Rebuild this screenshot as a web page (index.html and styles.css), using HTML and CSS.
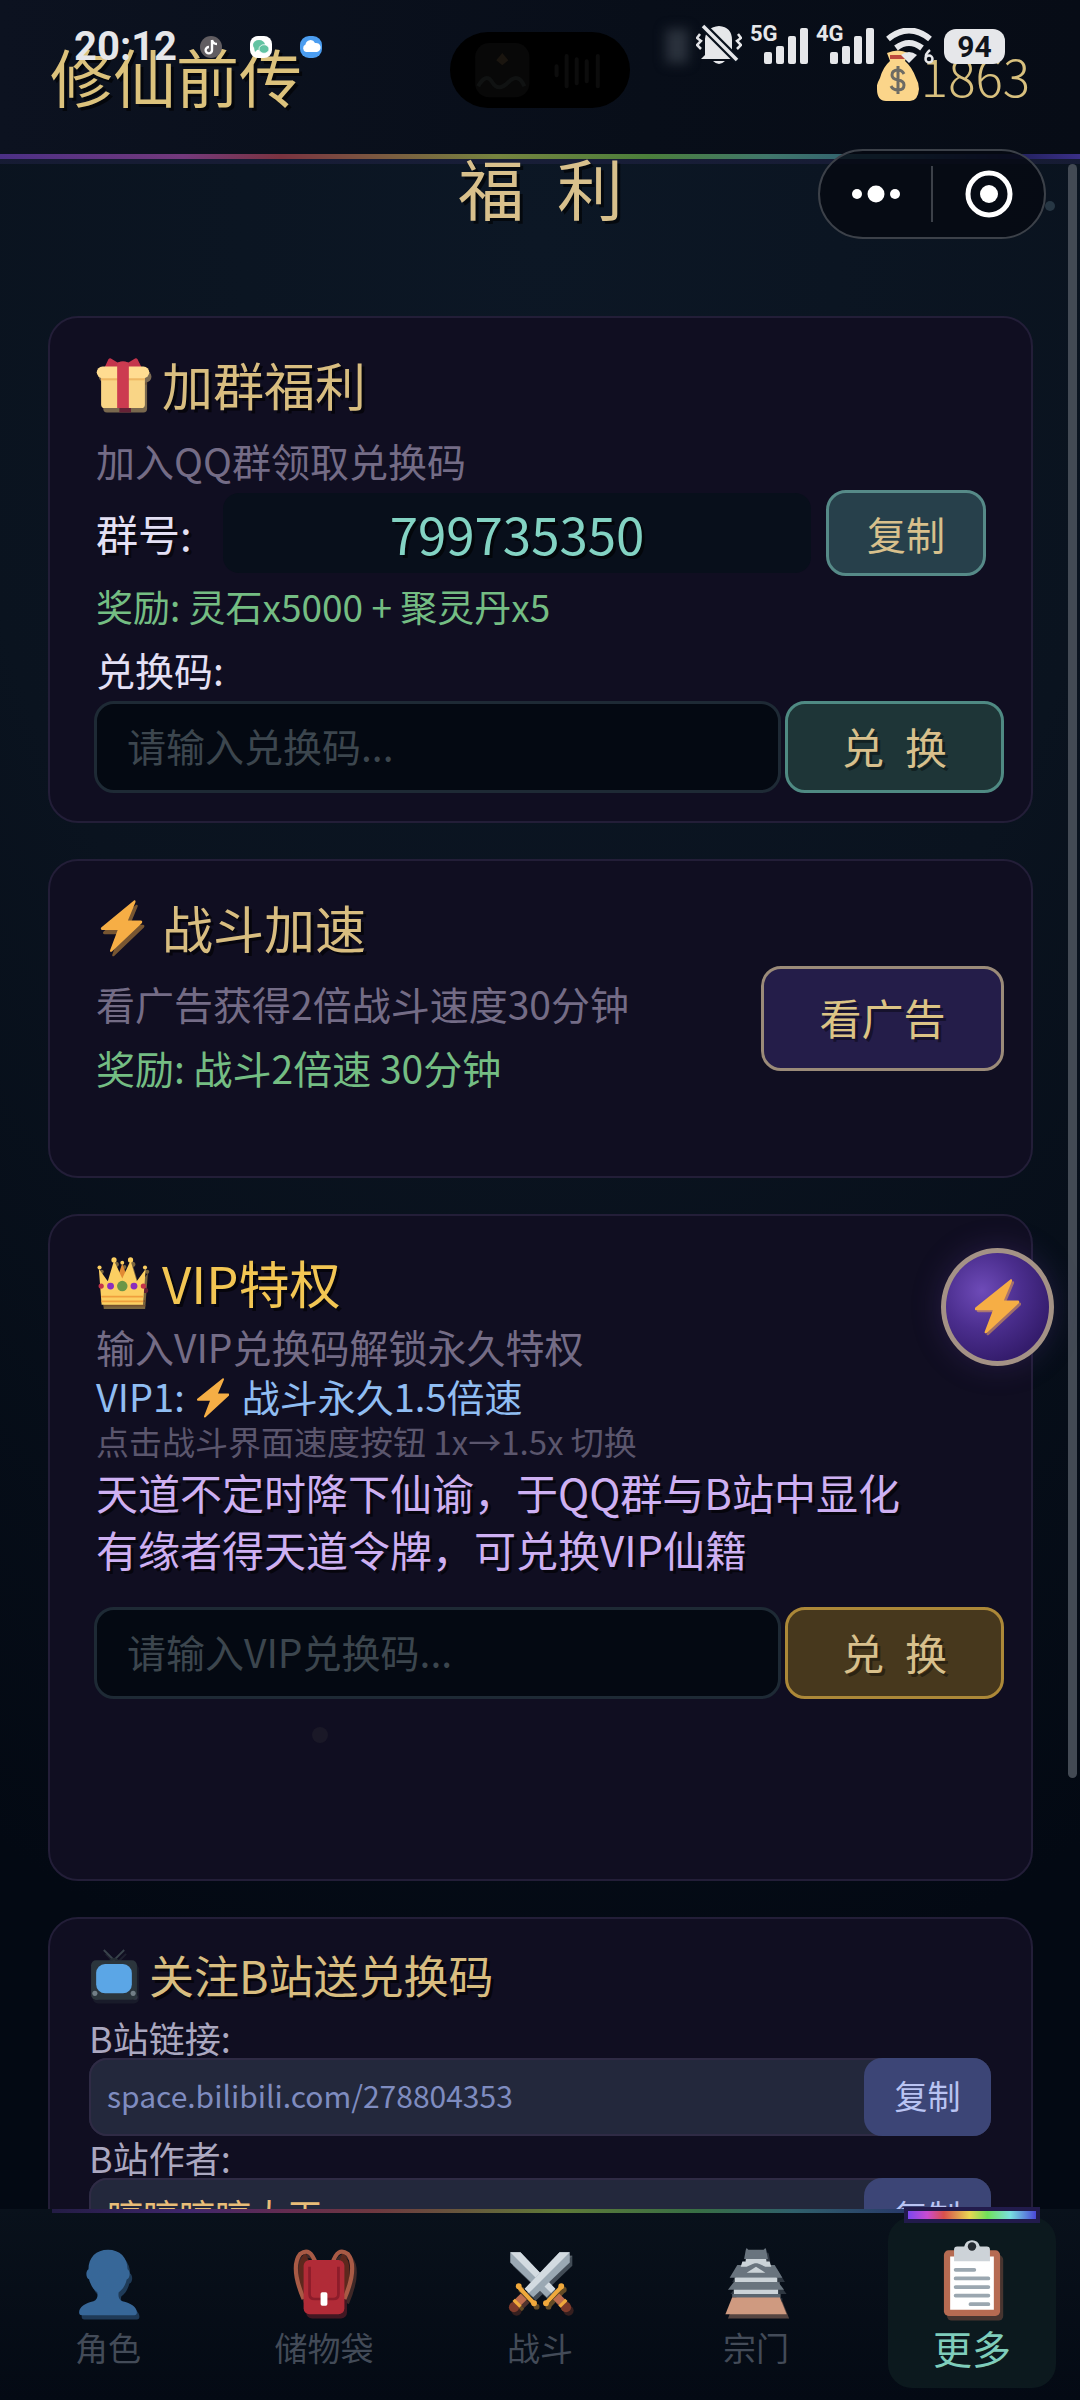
FILE: index.html
```
<!DOCTYPE html>
<html lang="zh-CN">
<head>
    <meta charset="UTF-8">
    <meta name="viewport" content="width=device-width, initial-scale=1.0">
    <title>修仙前传 - 福利</title>
    <link rel="stylesheet" href="styles.css">
</head>

<body>
    <!-- shared icons -->
    <svg class="sprite" aria-hidden="true">
        <symbol id="bolt" viewBox="2 0 32 36" preserveAspectRatio="none" overflow="visible">
            <path fill="#f6ae45" d="M27.500 .5c.9-.7 1.800 0 1.400 1L23 14h10c1.300 0 1.600 1.100.8 1.900L10.500 35.300c-1 .7-1.900 0-1.400-1L15 20.500H3c-1.300 0-1.600-1.200-.7-1.900z"/>
        </symbol>
        <symbol id="gift" viewBox="0 0 36 36" overflow="visible">
            <path fill="#c4344c" d="M5 8 8 1.500q1-1.300 2.300-.2L14.500 4q3.500-2 7 0l4.200-2.700q1.300-1.100 2.300.2L31 8z"/>
            <rect x="3" y="12" width="30" height="23" rx="2.500" fill="#f9d586"/>
            <rect x="3" y="13" width="30" height="3" fill="#eeb763"/>
            <rect x="0" y="6.500" width="36" height="8" rx="4" fill="#ffdc91"/>
            <path fill="#cc3b50" d="M14 4q4-2 8 0v31h-8z"/>
        </symbol>
        <symbol id="crown" viewBox="0 0 36 36" overflow="visible">
            <path fill="#e28a34" d="M9 18 12 6l3 8 3-9 3 9 3-8 3 12z"/>
            <path fill="#fccf62" d="M3 35 1 9l6.500 9L12 3 18 16 24 3 28.500 18 35 9l-2 26z"/>
            <g fill="#fccf62"><circle cx="1.500" cy="8" r="1.500"/><circle cx="12" cy="2.500" r="1.900"/><circle cx="24" cy="2.500" r="1.900"/><circle cx="34.500" cy="8" r="1.500"/><circle cx="18" cy="4.500" r="1.400"/></g>
            <path fill="#ef9f3d" d="M2.800 28.500h30.400v1.300H2.800zM2.900 32h30.200v1.200H2.900z"/>
            <circle cx="18" cy="21.500" r="3.800" fill="#6b9647"/>
            <circle cx="9.500" cy="21.500" r="2.500" fill="#8b2dbd"/><circle cx="26.500" cy="21.500" r="2.500" fill="#8b2dbd"/>
            <circle cx="2.700" cy="21.500" r="1.900" fill="#c4344c"/><circle cx="33.300" cy="21.500" r="1.900" fill="#c4344c"/>
        </symbol>
        <symbol id="tv" viewBox="0 0 36 40" overflow="visible">
            <path d="M10 0 18 8 26 0" fill="none" stroke="#39434b" stroke-width="1.500"/>
            <path fill="#252e35" d="M14 8q4-4 8 0z"/>
            <rect y="8" width="36" height="31" rx="4" fill="#2b353c"/>
            <rect x="4" y="11" width="28" height="23" rx="7" fill="#5ba6e6"/>
            <circle cx="3" cy="34" r="2" fill="#727f87"/><circle cx="33" cy="34" r="2" fill="#727f87"/>
        </symbol>
        <symbol id="bag" viewBox="0 0 36 40" overflow="visible">
            <path fill="#5d281d" d="M7 3Q-1 10 7 32l3-22zM29 3q8 7 0 29l-3-22z"/>
            <path d="M6 30Q-2 11 4 3.500 10-1 13 9M30 30q8-19 2-26.500Q26-1 23 9" fill="none" stroke="#a85a45" stroke-width="2.500"/>
            <rect x="6" y="7" width="24" height="32" rx="3.500" fill="#b12b37"/>
            <path d="M9.500 11v16q0 3 3 3h11q3 0 3-3V11" fill="none" stroke="#8c1c2a" stroke-width="1.600"/>
            <rect x="16" y="26" width="4" height="8" rx="1" fill="#fff"/>
        </symbol>
        <symbol id="user" viewBox="0 0 36 40" overflow="visible">
            <path fill="#376798" d="M18 1c7 0 11.500 4.500 11.500 11.500 1.800 1 1.600 5.500-.5 6-.8 3.500-2.500 6-4.700 7.500-.5 2.500.2 4.500 2.200 5.300 5 1.200 8.500 3.200 8.500 6.700 0 1-.5 1.500-1.500 1.500H2.500C1.500 39.500 1 39 1 38c0-3.500 3.500-5.500 8.500-6.700 2-.8 2.700-2.800 2.200-5.300C9.500 24.500 7.800 22 7 18.500c-2.100-.5-2.300-5-.5-6C6.500 5.500 11 1 18 1z"/>
        </symbol>
        <symbol id="sword" viewBox="0 0 36 36" overflow="visible">
            <path fill="#9aa8b3" d="M35.500.5v6L14 27l-5-5L29.500.5z"/>
            <path fill="#d3dbe1" d="M35.500.5 11.500 24.500 9 22 29.500.5z"/>
            <path d="M8.500 26.500 4 31" stroke="#bd6c4e" stroke-width="5"/>
            <circle cx="2.700" cy="32.800" r="3" fill="#7d3a2b"/>
            <path d="M5.500 21 14 30" stroke="#f0a93c" stroke-width="2.400"/>
            <circle cx="5.500" cy="20.500" r="1.700" fill="#f0a93c"/><circle cx="14.500" cy="30.500" r="1.700" fill="#f0a93c"/>
            <path d="m2.500 28.500 4 4" stroke="#f0a93c" stroke-width="2"/>
        </symbol>
        <symbol id="swords" viewBox="0 0 36 36" overflow="visible">
            <g transform="translate(36 0) scale(-1 1)"><use href="#sword" width="36" height="36"/></g>
            <use href="#sword" width="36" height="36"/>
        </symbol>
        <symbol id="castle" viewBox="0 0 36 40" overflow="visible">
            <path fill="#cf9a80" d="M4 29h28l4 10H0z"/>
            <path fill="#5b6670" d="M4 27h28v2H4z"/>
            <path fill="#cbd3d8" d="M5 23h26v4H5zM6 16h24v4H6zM12 6h12v6H12z"/>
            <path fill="#69747e" d="M5 20h26l3.500 4.500h-33zM7 10h2l3 .5 1-1.500h10l1 1.500 3-.5h2l4.500 7.500H2.500zM12 1l.5-1 1 1h9l1-1 .5 1 1 5.500H11z"/>
            <path fill="#cbd3d8" d="M5.500 17.500h25V20h-25zM10 8h2v-1h12v1h2l1 3h-3.500L18 8.500 12.500 11H9zM18 11l5.500 3.500h-11z"/>
        </symbol>
        <symbol id="clipboard" viewBox="0 0 36 50" overflow="visible">
            <rect y="6" width="36" height="42" rx="3" fill="#b66b52"/>
            <path fill="#fff" d="M4 10h28v34H4z"/>
            <path fill="#cdd3d8" d="M6.500 5.500q0-2 2-2H13q1-4 5-4t5 4h4.500q2 0 2 2V13h-23z"/>
            <circle cx="18" cy="3.500" r="2.700" fill="#252b31"/>
            <path d="M7.500 18.500h12M7.500 24h21M7.500 29.500h21M7.500 35h21M17 40.500h11.500" stroke="#9ba7b0" stroke-width="2.400" stroke-linecap="round"/>
        </symbol>
    </svg>

    <header class="top-bar">
        <h1 class="game-name">修仙前传</h1>
        <div class="coins">
            <svg class="coin-bag" viewBox="0 0 42 52">
                <path fill="#fbd58a" d="M13 12 10 4Q21-1 31 4l-3 8q7 6 11 17 3 5 3 11-1 12-9 12H9Q0 52 0 40q-1-4 3-11Q6 18 13 12z"/>
                <path fill="#bd4a3e" d="M13 6h15v4H13z"/>
                <path d="M27 25q-2-4-6-4-6 0-6 5 0 4 6 5t6 5q0 5-6 5-5 0-7-4M21 17v28" fill="none" stroke="#6d6b64" stroke-width="3"/>
            </svg>
            <span>1863</span>
        </div>
    </header>

    <!-- phone status bar -->
    <div class="status-bar">
        <div class="status-left">
            <span class="clock">20:12</span>
            <svg class="app-dot" viewBox="0 0 22 22"><circle cx="11" cy="11" r="11" fill="#615d61"/><path d="M12 4v10a3.200 3.200 0 1 1-3-3M12 4q1 4 5 4" fill="none" stroke="#fff" stroke-width="2.400"/></svg>
            <svg class="app-dot" viewBox="0 0 22 22"><rect width="22" height="22" rx="8" fill="#fff"/><ellipse cx="9" cy="9" rx="6" ry="5" fill="#62c3a2"/><path fill="#62c3a2" d="m4 12 1 4 3-3z"/><ellipse cx="14" cy="13" rx="5" ry="4.300" fill="#62c3a2" stroke="#fff" stroke-width=".8"/></svg>
            <svg class="app-dot" viewBox="0 0 22 22"><rect width="22" height="22" rx="9" fill="#4b9df0"/><path fill="#fff" d="M6 16a4 4 0 0 1-.5-7.500 5 5 0 0 1 9.500-1.500 4.600 4.600 0 0 1 2 9z"/></svg>
        </div>
        <div class="island">
            <svg viewBox="0 0 179 76"><rect x="25" y="11" width="54" height="54" rx="14" fill="#080808"/><path d="m52 21 6 7-6 5-6-5z" fill="#1a150f"/><path d="M28 54q8-14 14-4t16 0 16 4" fill="none" stroke="#101212" stroke-width="4"/><path d="M106 34v9M116 24v30M126 27v24M136 29v20M147 24v30" stroke="#0c0c0c" stroke-width="4" stroke-linecap="round"/></svg>
        </div>
        <div class="status-right">
            <i class="smudge"></i>
            <svg class="bell" viewBox="0 0 46 42"><g fill="#e6e7ea"><path d="M9 31V15Q10 3 23 2q13 1 13 14v15l4 4H5z"/><path d="M17 37h12q-6 6-12 0z"/></g><path d="M6 1 42 37" stroke="#09111d" stroke-width="8"/><path d="M7 2 41 36" stroke="#e6e7ea" stroke-width="3.500"/><path d="m4 10-3 4 4 3-4 4 4 4M42 10l3 4-4 3 4 4-4 4" fill="none" stroke="#e6e7ea" stroke-width="2.500"/></svg>
            <div class="signal"><b>5G</b><svg viewBox="0 0 44 36"><g fill="#e6e7ea"><rect y="24" width="8" height="12" rx="2"/><rect x="12" y="18" width="8" height="18" rx="2"/><rect x="24" y="8" width="8" height="28" rx="2"/><rect x="36" width="8" height="36" rx="2"/></g></svg></div>
            <div class="signal"><b>4G</b><svg viewBox="0 0 44 36"><g fill="#e6e7ea"><rect y="24" width="8" height="12" rx="2"/><rect x="12" y="18" width="8" height="18" rx="2"/><rect x="24" y="8" width="8" height="28" rx="2"/><rect x="36" width="8" height="36" rx="2"/></g></svg></div>
            <svg class="wifi" viewBox="0 0 50 36"><path d="M2 11q21-17 42 0M10 20q13-10 26 0" fill="none" stroke="#e6e7ea" stroke-width="6"/><path fill="#e6e7ea" d="M15 27q8-6 16 0l-8 8z"/><path d="M44 22q-5 4-4 8" fill="none" stroke="#e6e7ea" stroke-width="2.500"/><circle cx="43" cy="31" r="3.500" fill="none" stroke="#e6e7ea" stroke-width="2.500"/></svg>
            <b class="battery">94</b>
        </div>
    </div>

    <!-- mini program capsule -->
    <div class="capsule">
        <button class="capsule-btn" aria-label="更多操作"><svg viewBox="0 0 48 48"><g fill="#fff"><circle cx="5" cy="24" r="5"/><circle cx="24" cy="24" r="8.500"/><circle cx="43" cy="24" r="5"/></g></svg></button>
        <i class="capsule-line"></i>
        <button class="capsule-btn" aria-label="关闭"><svg viewBox="0 0 48 48"><circle cx="24" cy="24" r="21" fill="none" stroke="#fff" stroke-width="5"/><circle cx="24" cy="24" r="9" fill="#fff"/></svg></button>
    </div>

    <main class="page">
        <h2 class="page-title">福&ensp;利</h2>

        <section class="card">
            <h3 class="card-title"><svg class="emoji" viewBox="0 0 36 37"><use href="#gift" x="1.500" y="3" width="36" height="36" opacity=".45"/><use href="#gift" width="36" height="36"/></svg>加群福利</h3>
            <p class="desc">加入QQ群领取兑换码</p>
            <div class="group-row">
                <label for="groupNo">群号:</label>
                <input id="groupNo" class="group-no" type="text" value="799735350" readonly>
                <button class="copy-btn" onclick="copyText('groupNo')">复制</button>
            </div>
            <p class="reward small">奖励: 灵石x5000 + 聚灵丹x5</p>
            <label class="code-label" for="code">兑换码:</label>
            <div class="code-row">
                <input id="code" class="code-input" type="text" placeholder="请输入兑换码...">
                <button class="btn">兑&ensp;换</button>
            </div>
        </section>

        <section class="card ad-card">
            <div class="ad-text">
                <h3 class="card-title"><svg class="emoji" viewBox="0 0 36 37"><use href="#bolt" x="4.500" y="3" width="28" height="36" opacity=".45"/><use href="#bolt" x="3" width="28" height="36"/></svg>战斗加速</h3>
                <p class="desc">看广告获得2倍战斗速度30分钟</p>
                <p class="reward">奖励: 战斗2倍速 30分钟</p>
            </div>
            <button class="btn btn-ad">看广告</button>
        </section>

        <section class="card vip-card">
            <h3 class="card-title vip-title"><svg class="emoji" viewBox="0 0 36 37"><use href="#crown" x="2" y="4" width="34" height="34" opacity=".45"/><use href="#crown" x=".5" y="1" width="34" height="34"/></svg>VIP特权</h3>
            <p class="desc">输入VIP兑换码解锁永久特权</p>
            <p class="vip-line">VIP1: <svg class="emoji-inline"><use href="#bolt"/></svg> 战斗永久1.5倍速</p>
            <p class="hint">点击战斗界面速度按钮 1x→1.5x 切换</p>
            <p class="oracle">天道不定时降下仙谕，于QQ群与B站中显化<br>有缘者得天道令牌，可兑换VIP仙籍</p>
            <div class="code-row">
                <input class="code-input" type="text" placeholder="请输入VIP兑换码..." aria-label="VIP兑换码">
                <button class="btn btn-vip">兑&ensp;换</button>
            </div>
        </section>

        <section class="card bili-card">
            <h3 class="card-title"><svg class="emoji" viewBox="0 0 36 40"><use href="#tv" x="1.500" y="3" width="36" height="40" opacity=".35"/><use href="#tv" width="36" height="40"/></svg>关注B站送兑换码</h3>
            <label class="bili-label" for="biliLink">B站链接:</label>
            <div class="bili-row">
                <input id="biliLink" type="text" value="space.bilibili.com/278804353" readonly>
                <button onclick="copyText('biliLink')">复制</button>
            </div>
            <label class="bili-label" for="biliName">B站作者:</label>
            <div class="bili-row">
                <input id="biliName" class="bili-name" type="text" value="哼哼哼哼大王" readonly>
                <button onclick="copyText('biliName')">复制</button>
            </div>
        </section>
    </main>

    <i class="scroll-thumb"></i>
    <i class="spark spark-top"></i>
    <i class="spark spark-vip"></i>

    <button class="float-btn" aria-label="加速">
        <svg viewBox="0 0 46 57"><use href="#bolt" x="2" y="2" width="44" height="55" opacity=".5"/><use href="#bolt" width="44" height="55"/></svg>
    </button>

    <nav class="tab-bar">
        <a class="tab" href="#"><svg viewBox="0 0 36 40"><use href="#user" x="1.500" y="2.500" width="36" height="40" opacity=".5"/><use href="#user" width="36" height="40"/></svg>角色</a>
        <a class="tab" href="#"><svg viewBox="0 0 36 40"><use href="#bag" x="1.500" y="2.500" width="36" height="40" opacity=".35"/><use href="#bag" width="36" height="40"/></svg>储物袋</a>
        <a class="tab" href="#"><svg viewBox="0 -2 36 40"><use href="#swords" x="1.500" y="2" width="36" height="36" opacity=".4"/><use href="#swords" width="36" height="36"/></svg>战斗</a>
        <a class="tab" href="#"><svg viewBox="0 0 36 40"><use href="#castle" x="1.500" y="2.500" width="36" height="40" opacity=".4"/><use href="#castle" width="36" height="40"/></svg>宗门</a>
        <a class="tab active" href="#"><svg viewBox="0 0 36 50"><use href="#clipboard" x="2" y="3" width="36" height="50" opacity=".35"/><use href="#clipboard" width="36" height="50"/></svg>更多</a>
    </nav>

    <script>
        function copyText(id) {
            const input = document.getElementById(id);
            input.select();
            document.execCommand("copy");
        }
    </script>
</body>
</html>
```
FILE: styles.css
```
* {
    box-sizing: border-box;
}
body {
    margin: 0;
    height: 100vh;
    display: flex;
    flex-direction: column;
    position: relative;
    overflow: hidden;
    font-family: "Noto Sans CJK SC", sans-serif;
    font-weight: 400;
    color: #e4e0f4;
    background: radial-gradient(ellipse 110% 75% at 50% 10%, #0c1725 0%, #0a131f 50%, #030913 100%);
}
h1, h2, h3, p {
    margin: 0;
    font-weight: inherit;
}
button, input {
    font: inherit;
    margin: 0;
}
button {
    cursor: pointer;
}
.sprite {
    position: absolute;
    width: 0;
    height: 0;
}

/* top */
.top-bar {
    height: 159px;
    flex: none;
    display: flex;
    justify-content: space-between;
    align-items: center;
    padding: 0 50px 4px;
    background: linear-gradient(90deg, #0c1220, #080e19 60%, #070c16);
    border-bottom: 5px solid;
    border-image: linear-gradient(90deg, #4b3086, #74397c 17%, #7a3340 26%, #7a6040 37%, #76843f 46%, #4b7f3b 60%, #40776b 71%, #30606f 80%, #1d1f55 93%, #3b2f88) 1;
    box-shadow: 0 5px 0 rgba(60, 50, 110, .25);
}
.game-name {
    font-size: 63px;
    line-height: 60px;
    color: #dcc27c;
    text-shadow: 3px 3px 0 rgba(0, 0, 0, .6);
}
.coins {
    display: flex;
    align-items: center;
    gap: 2px;
    font-size: 51px;
    font-weight: 300;
    line-height: 60px;
    color: #d8c07e;
}
.coin-bag {
    width: 42px;
    height: 52px;
}

.status-bar {
    position: absolute;
    top: 24px;
    left: 0;
    right: 0;
    display: flex;
    justify-content: space-between;
    padding: 0 75px 0 74px;
    color: #e6e7ea;
}
.status-left {
    width: 374px;
    height: 46px;
    display: flex;
    align-items: center;
    gap: 28px;
}
.clock {
    font-family: Roboto, sans-serif;
    font-size: 40px;
    font-weight: 700;
    line-height: 46px;
    width: 98px;
}
.app-dot {
    width: 22px;
    height: 22px;
}
.island {
    width: 180px;
    height: 76px;
    margin-top: 8px;
    border-radius: 38px;
    background: #000;
    overflow: hidden;
}
.status-right {
    width: 374px;
    height: 44px;
    display: flex;
    justify-content: flex-end;
    align-items: flex-start;
    gap: 8px;
}
.smudge {
    width: 22px;
    height: 34px;
    margin-top: 5px;
    background: #2b323d;
    filter: blur(6px);
}
.bell {
    width: 46px;
    height: 42px;
}
.signal {
    display: flex;
    align-items: flex-end;
    height: 40px;
}
.signal b {
    align-self: flex-start;
    width: 28px;
    margin-right: -14px;
    font: 700 22px/20px Roboto, sans-serif;
}
.signal svg {
    width: 44px;
    height: 36px;
}
.wifi {
    width: 50px;
    height: 36px;
    margin: 4px 0 0 4px;
}
.battery {
    width: 61px;
    margin-top: 5px;
    border-radius: 12px;
    background: #e6e7ea;
    color: #10141c;
    font: 700 30px/35px Roboto, sans-serif;
    text-align: center;
}

.capsule {
    position: absolute;
    top: 149px;
    right: 34px;
    z-index: 3;
    width: 228px;
    height: 90px;
    display: flex;
    align-items: center;
    border: 2px solid #3c4149;
    border-radius: 45px;
    background: rgba(5, 9, 17, .8);
}
.capsule-btn {
    flex: 1;
    height: 100%;
    display: flex;
    align-items: center;
    justify-content: center;
    padding: 0;
    border: 0;
    background: none;
}
.capsule-btn svg {
    width: 48px;
    height: 48px;
}
.capsule-line {
    width: 2px;
    height: 56px;
    background: #3c4149;
}

/* content */
.page {
    flex: 1;
    min-height: 0;
    display: flex;
    flex-direction: column;
    gap: 36px;
    padding: 0 47px 0 48px;
}
.page-title {
    flex: none;
    margin-bottom: 67px;
    font-size: 66px;
    line-height: 54px;
    text-align: center;
    color: #d8c08c;
    text-shadow: 3px 3px 0 rgba(0, 0, 0, .6);
}
.card {
    flex: none;
    padding: 36px 27px 28px 44px;
    border: 2px solid #231e38;
    border-radius: 30px;
    background: #100e21;
}
.card > p, .card > label, .card > .card-title, .ad-text, .group-row {
    padding-left: 2px;
}
.card-title {
    display: flex;
    align-items: center;
    gap: 12px;
    font-size: 51px;
    line-height: 60px;
    color: #d8bd80;
    text-shadow: 3px 3px 0 rgba(0, 0, 0, .6);
}
.emoji {
    width: 54px;
    height: 54px;
    overflow: visible;
}
.desc {
    margin: 21px 0 5px;
    font-size: 39px;
    line-height: 50px;
    color: #746c86;
}
.group-row {
    display: flex;
    align-items: center;
    gap: 15px;
    padding-right: 18px;
    font-size: 42px;
}
.group-row label {
    width: 112px;
    line-height: 60px;
    text-shadow: 3px 3px 0 rgba(0, 0, 0, .5);
}
.group-no {
    flex: 1;
    min-width: 0;
    height: 80px;
    padding: 0;
    border: 0;
    border-radius: 16px;
    background: #080f1b;
    font-size: 51px;
    text-align: center;
    color: #83d3c3;
    text-shadow: 3px 3px 0 rgba(0, 0, 0, .6);
}
.copy-btn {
    width: 160px;
    height: 86px;
    border: 3px solid #568a88;
    border-radius: 20px;
    background: #27404b;
    font-size: 39px;
    color: #d8c08c;
}
.reward {
    font-size: 39px;
    line-height: 60px;
    color: #74bd83;
}
.reward.small {
    font-size: 37px;
}
.code-label {
    display: block;
    margin-top: 3px;
    font-size: 39px;
    line-height: 60px;
}
.code-row {
    display: flex;
    gap: 4px;
    margin-top: 2px;
}
.code-input {
    flex: 1;
    min-width: 0;
    height: 92px;
    padding: 0 30px 4px;
    border: 3px solid #1e2a35;
    border-radius: 20px;
    background: #040912;
    font-size: 39px;
    color: #e4e0f4;
}
.code-input::placeholder {
    color: #3c464e;
}
.btn {
    width: 219px;
    height: 92px;
    padding: 0 0 4px;
    border: 3px solid #4f8a83;
    border-radius: 20px;
    background: #1e3537;
    font-size: 42px;
    color: #d8c08c;
    text-shadow: 3px 3px 0 rgba(0, 0, 0, .4);
}

.ad-card {
    display: flex;
    align-items: center;
    justify-content: space-between;
    padding-top: 0;
    padding-bottom: 0;
}
.ad-text {
    padding-top: 36px;
    padding-bottom: 79px;
}
.ad-text .reward {
    margin-top: 9px;
}
.btn-ad {
    width: 243px;
    height: 105px;
    border-color: #9b8b79;
    background: #241d49;
    color: #dcc485;
}

.vip-card {
    padding-bottom: 180px;
}
.vip-title {
    color: #f3c653;
}
.vip-card .desc {
    margin: 9px 0 0;
}
.vip-line {
    font-size: 38px;
    line-height: 50px;
    color: #90bdf2;
}
.emoji-inline {
    width: 32px;
    height: 40px;
    margin: 0 4px;
    vertical-align: -6px;
}
.hint {
    font-size: 33px;
    line-height: 40px;
    color: #5b566d;
}
.oracle {
    margin-top: 2px;
    font-size: 42px;
    line-height: 57px;
    color: #ceb0f2;
    text-shadow: 3px 3px 0 rgba(0, 0, 0, .6);
}
.vip-card .code-row {
    margin-top: 30px;
}
.btn-vip {
    border-color: #ac8838;
    background: #47381d;
}

.bili-card {
    padding: 26px 40px 40px 39px;
}
.bili-card .card-title {
    font-size: 45px;
}
.bili-card > .bili-label {
    padding-left: 0;
}
.bili-card .emoji {
    width: 46px;
    height: 51px;
}
.bili-label {
    display: block;
    font-size: 36px;
    line-height: 42px;
    color: #aba8c0;
}
.card-title + .bili-label {
    margin-top: 11px;
}
.bili-row {
    display: flex;
    height: 78px;
    border-radius: 18px;
    background: #23283c;
    box-shadow: inset 0 0 0 2px #2f2b45;
}
.bili-row input {
    flex: 1;
    min-width: 0;
    padding: 0 18px 4px;
    border: 0;
    background: none;
    font-size: 30px;
    color: #7f8cc0;
}
.bili-row .bili-name {
    font-size: 36px;
    color: #e8bd78;
}
.bili-row button {
    width: 127px;
    padding: 0 0 4px;
    border: 0;
    border-radius: 18px;
    background: #3c4576;
    font-size: 33px;
    color: #b9c3f2;
}

/* things floating over the page */
.scroll-thumb {
    position: absolute;
    top: 164px;
    right: 3px;
    width: 9px;
    height: 1614px;
    border-radius: 5px;
    background: #434a54;
}
.spark {
    position: absolute;
    border-radius: 50%;
}
.spark-top {
    top: 201px;
    right: 25px;
    width: 10px;
    height: 10px;
    background: #273744;
}
.spark-vip {
    top: 1727px;
    left: 312px;
    width: 16px;
    height: 16px;
    background: #1a1827;
}
.float-btn {
    position: absolute;
    top: 1248px;
    right: 26px;
    width: 113px;
    height: 118px;
    display: flex;
    align-items: center;
    justify-content: center;
    padding: 0;
    border: 5px solid #a49286;
    border-radius: 50%;
    background: radial-gradient(circle at 35% 35%, #6e4bb8, #4b2e8e 40%, #341c6c 75%);
    box-shadow: 0 0 30px rgba(90, 60, 150, .3);
}
.float-btn svg {
    width: 46px;
    height: 57px;
}

/* bottom tabs */
.tab-bar {
    position: relative;
    flex: none;
    height: 191px;
    display: flex;
    background: linear-gradient(#09111b, #040a14);
}
.tab-bar::before {
    content: "";
    position: absolute;
    top: 0;
    left: 52px;
    right: 52px;
    height: 4px;
    background: linear-gradient(90deg, #231c44, #40276c 14%, #642c50 24%, #6e3840 33%, #5f7a38 52%, #386f44 66%, #30606b 76%, #28386a 88%, transparent);
}
.tab {
    position: relative;
    flex: 1;
    display: flex;
    flex-direction: column;
    align-items: center;
    gap: 9px;
    margin: 8px 24px 12px;
    padding-top: 31px;
    font-size: 33px;
    line-height: 44px;
    color: #434b58;
    text-decoration: none;
}
.tab svg {
    width: 62px;
    height: 68px;
    overflow: visible;
}
.tab.active {
    padding-top: 24px;
    border-radius: 24px;
    background: #0c191e;
    font-size: 39px;
    color: #7fcdbb;
}
.tab.active svg {
    height: 78px;
    margin-bottom: -3px;
}
.tab.active::before {
    content: "";
    position: absolute;
    top: -6px;
    left: 20px;
    right: 20px;
    height: 8px;
    background: linear-gradient(90deg, #7c48f0, #c94bd0 15%, #d8504c 28%, #e8d652 48%, #70e05a 62%, #79dfe0 80%, #4a48d8);
    box-shadow: 0 0 0 4px #221b4c;
}
```
